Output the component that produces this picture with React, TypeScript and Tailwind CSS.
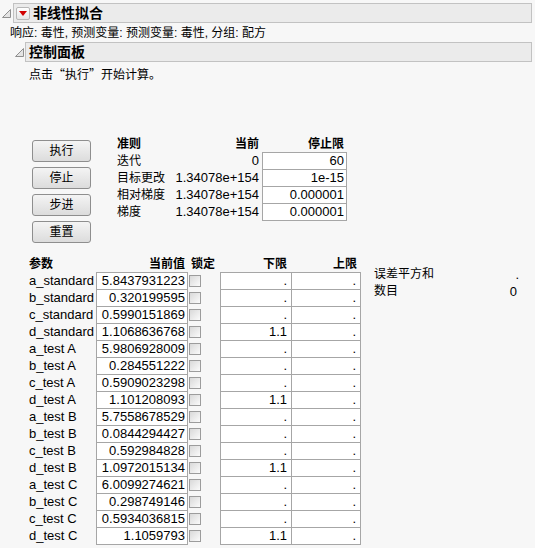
import React from 'react';

// Nonlinear fit report (JMP style)

const params: [string, string, string][] = [
  ['a_standard', '5.8437931223', '.'],
  ['b_standard', '0.320199595', '.'],
  ['c_standard', '0.5990151869', '.'],
  ['d_standard', '1.1068636768', '1.1'],
  ['a_test A', '5.9806928009', '.'],
  ['b_test A', '0.284551222', '.'],
  ['c_test A', '0.5909023298', '.'],
  ['d_test A', '1.101208093', '1.1'],
  ['a_test B', '5.7558678529', '.'],
  ['b_test B', '0.0844294427', '.'],
  ['c_test B', '0.592984828', '.'],
  ['d_test B', '1.0972015134', '1.1'],
  ['a_test C', '6.0099274621', '.'],
  ['b_test C', '0.298749146', '.'],
  ['c_test C', '0.5934036815', '.'],
  ['d_test C', '1.1059793', '1.1'],
];

const criteria: [string, string, string][] = [
  ['迭代', '0', '60'],
  ['目标更改', '1.34078e+154', '1e-15'],
  ['相对梯度', '1.34078e+154', '0.000001'],
  ['梯度', '1.34078e+154', '0.000001'],
];

const Disclosure = () => (
  <svg width="9" height="9" viewBox="0 0 9 9" className="shrink-0">
    <polygon points="8.5,0.5 8.5,8.5 0.5,8.5" fill="#e4e4e4" stroke="#8f8f8f" strokeWidth="1" />
  </svg>
);

const RedMenu = () => (
  <div className="w-[14px] h-[13px] shrink-0 rounded-[2px] border border-[#b8b8b8] bg-gradient-to-b from-white to-[#e6e6e6] flex items-center justify-center">
    <svg width="8" height="5" viewBox="0 0 8 5">
      <polygon points="0,0 8,0 4,5" fill="#d10000" />
    </svg>
  </div>
);

const CheckBox = () => (
  <div className="ml-[1px] w-[12px] h-[12px] border border-[#9c9c9c] bg-gradient-to-br from-[#d9d9d9] to-[#fbfbfb]" />
);

const Btn = ({ label }: { label: string }) => (
  <div className="w-[59px] h-[22px] rounded-[3px] border border-[#8e8e8e] bg-gradient-to-b from-[#f4f4f4] to-[#dcdcdc] flex items-center justify-center text-[12px] text-black">
    {label}
  </div>
);

export default function App() {
  const last = params.length - 1;
  return (
    <div
      className="w-[535px] h-[548px] bg-[#f7f7f7] text-black overflow-hidden flex flex-col"
      style={{ fontFamily: '"Liberation Sans", "Noto Sans CJK SC", sans-serif' }}
    >
      {/* Top header */}
      <div className="mt-[3px] pl-[2px] flex items-center">
        <Disclosure />
        <div className="ml-[2px] w-[519px] h-[20px] border border-[#c2c2c2] bg-[#ebebeb] flex items-center pl-[2px] gap-[3px]">
          <RedMenu />
          <span className="text-[14px] font-bold leading-[18px]">非线性拟合</span>
        </div>
      </div>

      <div className="mt-[2px] pl-[10px] h-[16px] leading-[16px] text-[12px]">
        响应: 毒性, 预测变量: 预测变量: 毒性, 分组: 配方
      </div>

      {/* Control panel header */}
      <div className="mt-[1px] pl-[15px] flex items-center">
        <Disclosure />
        <div className="ml-[1px] w-[507px] h-[20px] border border-[#c2c2c2] bg-[#ebebeb] flex items-center pl-[3px]">
          <span className="text-[14px] font-bold leading-[18px]">控制面板</span>
        </div>
      </div>

      <div className="mt-[4px] pl-[29px] h-[16px] leading-[16px] text-[12px] font-['Noto_Sans_CJK_SC',sans-serif]">
        点击“执行”开始计算。
      </div>

      {/* Buttons + criteria */}
      <div className="mt-[53px] flex">
        <div className="ml-[32px] pt-[5px] flex flex-col gap-[5px]">
          <Btn label="执行" />
          <Btn label="停止" />
          <Btn label="步进" />
          <Btn label="重置" />
        </div>
        <div className="ml-[26px] grid grid-cols-[52px_87px_85px] gap-x-[3px] text-[13px] leading-[16px] auto-rows-[17px]">
          <div className="text-[12px] font-bold flex items-center">准则</div>
          <div className="text-[12px] font-bold flex items-center justify-end">当前</div>
          <div className="text-[12px] font-bold flex items-center justify-end pr-[3px]">停止限</div>
          {criteria.map(([n, cur, stop], i) => (
            <React.Fragment key={n}>
              <div className="text-[12px] whitespace-nowrap flex items-center">{n}</div>
              <div className="flex items-center justify-end">{cur}</div>
              <div
                className={
                  i === criteria.length - 1
                    ? 'h-[18px] border border-[#a6a6a6] bg-white flex items-center justify-end pr-[2px]'
                    : 'border-t border-x border-[#a6a6a6] bg-white flex items-center justify-end pr-[2px]'
                }
              >
                {stop}
              </div>
            </React.Fragment>
          ))}
        </div>
      </div>

      {/* Parameters */}
      <div className="mt-[12px] pl-[29px] flex">
        <div className="grid grid-cols-[67px_92px_32px_71px_70px] auto-rows-[17px] text-[13px] leading-[16px]">
          <div className="text-[12px] font-bold flex items-center">参数</div>
          <div className="text-[12px] font-bold flex items-center justify-end pr-[3px]">当前值</div>
          <div className="text-[12px] font-bold flex items-center pl-[3px]">锁定</div>
          <div className="text-[12px] font-bold flex items-center justify-end pr-[4px]">下限</div>
          <div className="text-[12px] font-bold flex items-center justify-end pr-[4px]">上限</div>
          {params.map(([name, val, lo], i) => (
            <React.Fragment key={name}>
              <div className="flex items-center whitespace-nowrap">{name}</div>
              <div
                className={
                  i === last
                    ? 'h-[18px] border border-[#a6a6a6] bg-white flex items-center justify-end pr-[2px]'
                    : 'border-t border-x border-[#a6a6a6] bg-white flex items-center justify-end pr-[2px]'
                }
              >
                {val}
              </div>
              <div className="flex items-center">
                <CheckBox />
              </div>
              <div
                className={
                  i === last
                    ? 'h-[18px] border-l border-y border-[#a6a6a6] bg-white flex items-center justify-end pr-[4px]'
                    : 'border-l border-t border-[#a6a6a6] bg-white flex items-center justify-end pr-[4px]'
                }
              >
                {lo}
              </div>
              <div
                className={
                  i === last
                    ? 'h-[18px] border border-[#a6a6a6] bg-white flex items-center justify-end pr-[4px]'
                    : 'border-t border-x border-[#a6a6a6] bg-white flex items-center justify-end pr-[4px]'
                }
              >
                .
              </div>
            </React.Fragment>
          ))}
        </div>

        <div className="ml-[13px] mt-[11px] w-[145px] flex flex-col text-[13px] leading-[17px]">
          <div className="flex justify-between h-[17px]">
            <span className="text-[12px]">误差平方和</span>
            <span>.</span>
          </div>
          <div className="flex justify-between h-[17px]">
            <span className="text-[12px]">数目</span>
            <span className="pr-[2px]">0</span>
          </div>
        </div>
      </div>
    </div>
  );
}
